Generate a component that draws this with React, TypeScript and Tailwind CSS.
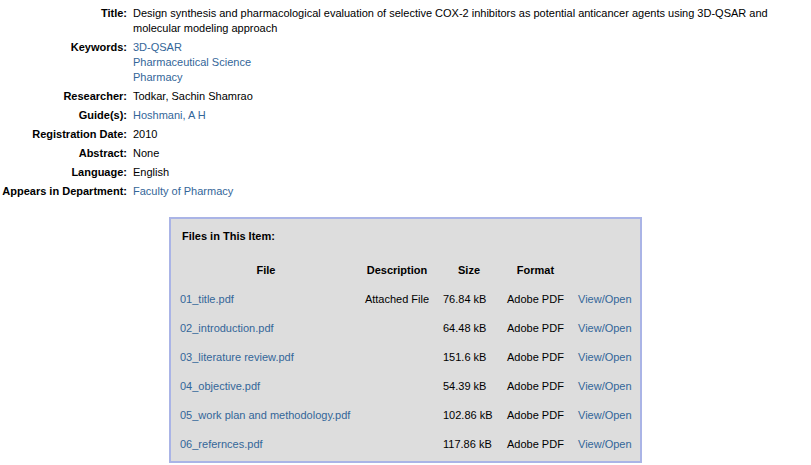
const details: { label: string; values: string[]; link?: boolean }[] = [
  {
    label: "Title:",
    values: [
      "Design synthesis and pharmacological evaluation of selective COX-2 inhibitors as potential anticancer agents using 3D-QSAR and molecular modeling approach",
    ],
  },
  { label: "Keywords:", values: ["3D-QSAR", "Pharmaceutical Science", "Pharmacy"], link: true },
  { label: "Researcher:", values: ["Todkar, Sachin Shamrao"] },
  { label: "Guide(s):", values: ["Hoshmani, A H"], link: true },
  { label: "Registration Date:", values: ["2010"] },
  { label: "Abstract:", values: ["None"] },
  { label: "Language:", values: ["English"] },
  { label: "Appears in Department:", values: ["Faculty of Pharmacy"], link: true },
]

const files = [
  { name: "01_title.pdf", desc: "Attached File", size: "76.84 kB" },
  { name: "02_introduction.pdf", desc: "", size: "64.48 kB" },
  { name: "03_literature review.pdf", desc: "", size: "151.6 kB" },
  { name: "04_objective.pdf", desc: "", size: "54.39 kB" },
  { name: "05_work plan and methodology.pdf", desc: "", size: "102.86 kB" },
  { name: "06_refernces.pdf", desc: "", size: "117.86 kB" },
]

export default function App() {
  return (
    <div className="min-h-[465px] bg-white font-['Liberation_Sans',Arial,sans-serif] text-[11px] leading-[15px] text-black">
      {/* Item metadata */}
      <table className="mt-[4px] w-full border-collapse">
        <tbody>
          {details.map((row) => (
            <tr key={row.label}>
              <td className="w-[131px] whitespace-nowrap py-[2px] pr-[4px] text-right align-top font-bold">
                {row.label}
              </td>
              <td className="py-[2px] pl-[2px] pr-[4px] align-top">
                {row.values.map((v) => (
                  <div key={v} className={row.link ? "text-[#336699]" : ""}>
                    {v}
                  </div>
                ))}
              </td>
            </tr>
          ))}
        </tbody>
      </table>

      {/* Files box */}
      <div className="mx-auto mt-[16px] w-[473px] border-2 border-[#aab4e6] bg-[#dddddd] pb-[2px] pl-[5px] pr-[3px] pt-[10px]">
        <div className="mb-[12px] pl-[6px] font-bold">Files in This Item:</div>
        <table className="w-full table-fixed border-collapse">
          <thead>
            <tr className="h-[29px] font-bold">
              <th className="w-[180px] text-center">File</th>
              <th className="w-[82px] text-center">Description</th>
              <th className="w-[62px] text-center">Size</th>
              <th className="w-[71px] text-center">Format</th>
              <th></th>
            </tr>
          </thead>
          <tbody>
            {files.map((f) => (
              <tr key={f.name} className="h-[29px]">
                <td className="whitespace-nowrap pl-[4px] text-[#336699]">{f.name}</td>
                <td className="whitespace-nowrap text-center">{f.desc}</td>
                <td className="whitespace-nowrap pl-[5px]">{f.size}</td>
                <td className="whitespace-nowrap pl-[7px]">Adobe PDF</td>
                <td className="whitespace-nowrap pl-[7px] text-[#336699]">View/Open</td>
              </tr>
            ))}
          </tbody>
        </table>
      </div>
    </div>
  )
}
